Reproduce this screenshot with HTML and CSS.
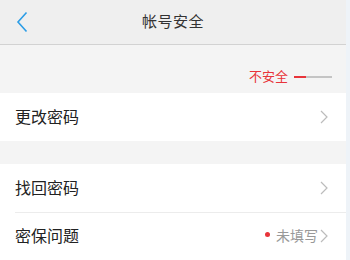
FILE: index.html
```html
<!DOCTYPE html>
<html lang="zh-CN">
<head>
    <meta charset="UTF-8">
    <meta name="viewport" content="width=device-width, initial-scale=1.0">
    <title>帐号安全</title>
    <link rel="stylesheet" href="styles.css">
</head>
<body>
    <div class="screen">
        <div class="page">
            <div class="header">
                <svg class="back" width="12" height="22" viewBox="0 0 12 22">
                    <path d="M10.5 1.5 L2 11 L10.5 20.5" fill="none" stroke="#2c9de6" stroke-width="1.6"/>
                </svg>
                <h1>帐号安全</h1>
            </div>

            <div class="level">
                <span class="level-text">不安全</span>
                <div class="level-bar">
                    <span class="level-fill"></span>
                </div>
            </div>

            <div class="group">
                <div class="row">
                    <span class="label">更改密码</span>
                    <svg class="arrow" width="8" height="14" viewBox="0 0 8 14"><path d="M1 1 L7 7 L1 13" fill="none" stroke="#bcbcbc" stroke-width="1.2"/></svg>
                </div>
            </div>

            <div class="group">
                <div class="row">
                    <span class="label">找回密码</span>
                    <svg class="arrow" width="8" height="14" viewBox="0 0 8 14"><path d="M1 1 L7 7 L1 13" fill="none" stroke="#bcbcbc" stroke-width="1.2"/></svg>
                </div>
                <div class="row">
                    <span class="label">密保问题</span>
                    <span class="status"><i class="dot"></i>未填写</span>
                    <svg class="arrow" width="8" height="14" viewBox="0 0 8 14"><path d="M1 1 L7 7 L1 13" fill="none" stroke="#bcbcbc" stroke-width="1.2"/></svg>
                </div>
            </div>
        </div>
        <div class="scrollbar"></div>
    </div>
</body>
</html>
```

FILE: styles.css
```css
* {
    box-sizing: border-box;
    margin: 0;
    padding: 0;
}

body {
    font-family: "Noto Sans CJK SC", "Noto Sans", sans-serif;
    background-color: #f4f4f4;
    width: 350px;
    height: 260px;
    overflow: hidden;
}

.screen {
    display: flex;
    height: 260px;
}

.page {
    flex: 1;
    background-color: #f4f4f4;
}

.scrollbar {
    width: 4px;
    background-color: #eef3f8;
}

.header {
    position: relative;
    height: 45px;
    background-color: #efefef;
    border-bottom: 1px solid #d2d2d2;
    display: flex;
    align-items: center;
    justify-content: center;
    padding-bottom: 3px;
}

.back {
    position: absolute;
    left: 16px;
    top: 11px;
}

h1 {
    font-size: 15px;
    line-height: 20px;
    font-weight: normal;
    color: #333;
    letter-spacing: 0.5px;
}

.level {
    height: 48px;
    display: flex;
    align-items: center;
    justify-content: flex-end;
    padding: 13px 14px 0 0;
}

.level-text {
    font-size: 13px;
    line-height: 16px;
    color: #e8343a;
    margin-right: 6px;
}

.level-bar {
    width: 38px;
    height: 2px;
    background-color: #c4c4c4;
    margin-top: 2px;
}

.level-fill {
    display: block;
    width: 12px;
    height: 2px;
    background-color: #e8343a;
}

.group {
    background-color: white;
    margin-bottom: 23px;
}

.row {
    height: 48px;
    display: flex;
    align-items: center;
    padding: 0 18px 3px 15px;
    position: relative;
}

.row + .row::before {
    content: "";
    position: absolute;
    top: 0;
    left: 15px;
    right: 0;
    border-top: 1px solid #ececec;
}

.label {
    flex: 1;
    font-size: 16px;
    line-height: 20px;
    color: #222;
}

.status {
    font-size: 14px;
    line-height: 16px;
    color: #999;
    display: flex;
    align-items: center;
    margin-right: 2px;
}

.dot {
    width: 5px;
    height: 5px;
    border-radius: 50%;
    background-color: #e8343a;
    margin-right: 6px;
}

.arrow {
    margin-top: 2px;
}
```
